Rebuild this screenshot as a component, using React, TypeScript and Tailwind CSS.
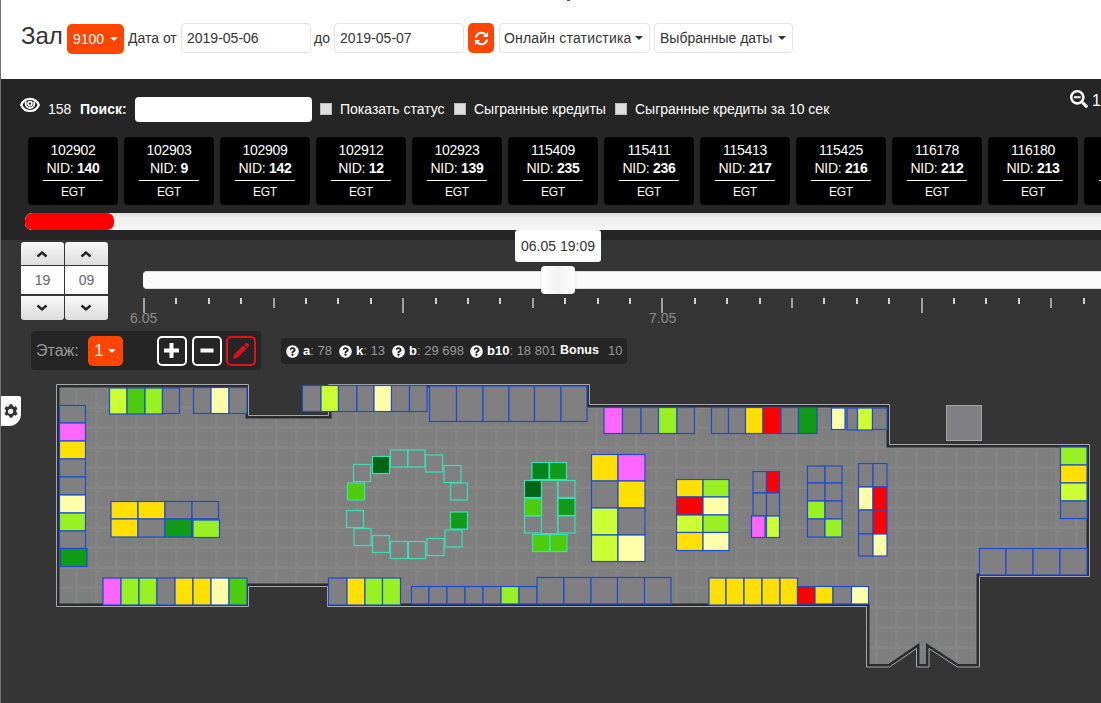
import React from 'react';
import { FaSearchMinus, FaQuestionCircle, FaCog } from 'react-icons/fa';

const palette: Record<string, string> = {
  '-': '#808083',
  Y: '#ffe000',
  P: '#ff66ff',
  C: '#ffffaa',
  L: '#99f022',
  H: '#ccff33',
  D: '#109c18',
  G: '#4ccc0c',
  R: '#ff0000',
  K: '#006614',
  M: '#04841a',
};

type Block = { xs: number[]; ys: number[]; rows: string[] };

const blocks: Block[] = [
  { xs: [59.5, 85.5], ys: [405.5, 423, 441, 459, 477, 495, 513, 531, 548.5], rows: ['-', 'P', 'Y', '-', '-', 'C', 'L', '-'] },
  { xs: [60.5, 87], ys: [548.5, 566.5], rows: ['D'] },
  { xs: [109.5, 127, 145, 162.5], ys: [388, 414], rows: ['HGL'] },
  { xs: [162.5, 179.5], ys: [388, 413.5], rows: ['-'] },
  { xs: [193.5, 211, 229, 247], ys: [387.5, 413.5], rows: ['-C-'] },
  { xs: [111, 138, 165, 192, 218.5], ys: [501.5, 519, 537], rows: ['YY--', 'Y-D-'] },
  { xs: [193, 219.5], ys: [520, 537.5], rows: ['L'] },
  { xs: [103, 121, 139, 157, 175, 193, 211, 229, 247], ys: [578, 605], rows: ['PLL-YYCG'] },
  { xs: [302.5, 321, 338.5, 357, 374, 391.5, 409.5, 427], ys: [385.5, 411.5], rows: ['-H--C--'] },
  { xs: [429.5, 456.5, 483, 509, 534.5, 561, 587], ys: [386, 421.5], rows: ['------'] },
  { xs: [328.5, 347, 365, 382.5, 400.5], ys: [578, 605], rows: ['-YLL'] },
  { xs: [411.5, 429, 447, 465, 483, 501, 519, 537], ys: [586.5, 604], rows: ['-----L-'] },
  { xs: [537, 564, 591, 617.5, 644.5, 671], ys: [577.5, 604], rows: ['-----'] },
  { xs: [604, 622.5, 641, 658.5, 677, 694.5], ys: [407.5, 433.5], rows: ['P--L-'] },
  { xs: [711.5, 728.5, 745.5, 763, 781, 798.5, 817], ys: [407.5, 433.5], rows: ['--YR-D'] },
  { xs: [831.5, 845], ys: [408, 429.5], rows: ['C'] },
  { xs: [847, 857.5, 872.5], ys: [408, 430], rows: ['-H'] },
  { xs: [872.5, 887], ys: [408, 429.5], rows: ['-'] },
  { xs: [591.5, 618, 645], ys: [454.5, 481, 508, 535, 561.5], rows: ['YP', '-Y', 'H-', 'HC'] },
  { xs: [676.5, 703, 729], ys: [479.5, 497, 515, 532.5, 550.5], rows: ['YL', 'RC', 'HL', 'YC'] },
  { xs: [753, 766.5, 779.5], ys: [471.5, 493, 516], rows: ['-R', '--'] },
  { xs: [751.5, 765], ys: [516, 537.5], rows: ['P'] },
  { xs: [766.5, 779.5], ys: [516, 537.5], rows: ['H'] },
  { xs: [807.5, 825, 842], ys: [466, 483, 501, 519, 537], rows: ['--', '--', 'L-', '-L'] },
  { xs: [858.5, 873, 887], ys: [463.5, 487, 510, 534, 556], rows: ['--', 'CR', '-R', '-C'] },
  { xs: [709, 726, 744, 762, 780, 797.5], ys: [578, 605], rows: ['YYYYY'] },
  { xs: [797.5, 815, 833, 851.5, 868.5], ys: [586.5, 604], rows: ['RY-C'] },
  { xs: [1060.5, 1087], ys: [447, 465, 483, 501, 518.5], rows: ['L', 'Y', 'H', '-'] },
  { xs: [979.5, 1006, 1033, 1060, 1087], ys: [548.5, 575], rows: ['----'] },
];

const islands: [number, number, string][] = [
  [353.5, 464.5, '-'], [372.5, 456.5, 'K'], [390.5, 450, '-'], [408, 450, '-'], [425.5, 455, '-'], [444, 465.5, '-'],
  [450.5, 483, '-'], [347.5, 483, 'G'], [346.5, 510.5, '-'], [354, 528.5, '-'], [372.5, 535.5, '-'], [390.5, 541.5, '-'],
  [408.5, 541.5, '-'], [427, 538.5, '-'], [445, 530, '-'], [450.5, 512, 'D'],
  [532, 462.5, 'M'], [549.5, 462.5, 'D'], [524.5, 480.5, 'K'], [524.5, 498.5, 'G'], [524.5, 516, '-'],
  [558, 480.5, '-'], [558, 498.5, 'D'], [558, 516, '-'], [532.5, 534.5, 'G'], [550, 534.5, 'G'],
];

const OUTLINE =
  '56.5,384.5 248.5,384.5 248.5,415.5 328.5,415.5 328.5,384.5 589.5,384.5 589.5,404.5 889.5,404.5 889.5,444.5 1089.5,444.5 1089.5,576.5 979.5,576.5 979.5,667 957.5,667 929,648.5 929,667 916.5,667 916.5,648.5 889.5,667 866.5,667 866.5,606.5 327.5,606.5 327.5,586.5 248.5,586.5 248.5,606.5 56.5,606.5';

function FloorPlan() {
  return (
    <svg className="block h-[328px] w-[1101px]" viewBox="0 375 1101 328">
      <defs>
        <pattern id="tiles" width="40" height="40" x="75" y="406" patternUnits="userSpaceOnUse">
          <path d="M0 1.5H40M1.5 0V40" stroke="#858585" strokeWidth="3" />
          <path d="M0 21.5H40M21.5 0V40" stroke="#838383" strokeWidth="3" />
        </pattern>
        <clipPath id="hall"><polygon points={OUTLINE} /></clipPath>
      </defs>
      <polygon points={OUTLINE} fill="#7f7f7f" />
      <polygon points={OUTLINE} fill="url(#tiles)" />
      <polygon points={OUTLINE} fill="none" stroke="#2b2c30" strokeWidth="6" clipPath="url(#hall)" />
      <polygon points={OUTLINE} fill="none" stroke="#a8a8a8" strokeWidth="1" />
      <rect x="946.5" y="405.5" width="35" height="35" fill="#808084" stroke="#a6a6a8" />
      {blocks.map((b, i) =>
        b.rows.map((row, r) =>
          row.split('').map((c, k) => (
            <rect key={`${i}-${r}-${k}`} x={b.xs[k]} y={b.ys[r]} width={b.xs[k + 1] - b.xs[k]} height={b.ys[r + 1] - b.ys[r]} fill={palette[c]} stroke="#1f4ccc" strokeWidth="1.2" />
          )),
        ),
      )}
      {islands.map(([x, y, c], i) => (
        <rect key={i} x={x} y={y} width="17" height="17" fill={palette[c]} stroke="#3fdcb4" strokeWidth="1.2" />
      ))}
      <path d="M541.5 480.5H557.5V533.5H541.5Z" fill="none" stroke="#3fdcb4" strokeWidth="1" />
    </svg>
  );
}

const Caret = ({ className = '' }: { className?: string }) => (
  <svg className={`h-1 w-2 shrink-0 ${className}`} viewBox="0 0 8 4"><path d="M0 0H8L4 4Z" fill="currentColor" /></svg>
);

const Eye = () => (
  <svg className="mb-[7px] h-4 w-5 shrink-0" viewBox="0 0 20 16" fill="none" stroke="#fff">
    <path d="M1.2 8C3 3.6 6.2 1.8 10 1.8S17 3.6 18.8 8C17 12.2 13.8 14 10 14S3 12.2 1.2 8Z" strokeWidth="2.2" />
    <path d="M6 4.5C4.8 8 6.6 11 10 11S15.200 8 14 4.500" strokeWidth="1.8" />
    <circle cx="10" cy="6.600" r="2" strokeWidth="1.600" />
  </svg>
);

const Refresh = () => (
  <svg className="h-[15px] w-[15px]" viewBox="0 0 16 16" fill="none" stroke="#fff" strokeWidth="2.2">
    <path d="M2 7a6 6 0 0 1 10.4-3M14 9A6 6 0 0 1 3.6 12" />
    <path d="M15 .8V6.4H9.4ZM1 15.2V9.6H6.6Z" fill="#fff" stroke="none" />
  </svg>
);

const Check = ({ label, width }: { label: string; width: string }) => (
  <label className={`flex shrink-0 items-center whitespace-nowrap ${width}`}>
    <span className="mr-2 h-3 w-3 shrink-0 border border-[#bcbcbc] bg-[#dedede]" />
    {label}
  </label>
);

const machines = [
  ['102902', '140'], ['102903', '9'], ['102909', '142'], ['102912', '12'], ['102923', '139'], ['115409', '235'],
  ['115411', '236'], ['115413', '217'], ['115425', '216'], ['116178', '212'], ['116180', '213'],
];

const Spinner = ({ value }: { value: string }) => (
  <div className="flex w-[43px] flex-col text-center text-sm text-[#666]">
    <button className="flex h-[23px] items-center justify-center rounded-t-[3px] bg-linear-to-b from-[#fafafa] to-[#dcdcdc]">
      <svg className="mr-px h-2 w-3" viewBox="0 0 12 8"><path d="M1.5 6.500L6 2.500L10.500 6.500" fill="none" stroke="#222" strokeWidth="2.4" /></svg>
    </button>
    <div className="mt-px h-[28px] bg-[#fdfdfd] leading-7">{value}</div>
    <button className="mt-[2px] flex h-6 items-center justify-center rounded-b-[3px] bg-linear-to-b from-[#fafafa] to-[#dcdcdc]">
      <svg className="mb-px mr-px h-2 w-3" viewBox="0 0 12 8"><path d="M1.5 1.500L6 5.500L10.500 1.500" fill="none" stroke="#222" strokeWidth="2.4" /></svg>
    </button>
  </div>
);

const Stat = ({ name, value, width }: { name: string; value: string; width: string }) => (
  <span className={`flex shrink-0 items-center whitespace-nowrap ${width}`}>
    <FaQuestionCircle className="mr-1 h-[13px] w-[13px] shrink-0 text-white" />
    <b className="text-white">{name}</b>:&nbsp;{value}
  </span>
);

const ticks = Array.from({ length: 30 }, (_, i) => i);

export default function App() {
  return (
    <div className="relative h-[703px] w-[1101px] overflow-hidden bg-[#353535] font-['Liberation_Sans',Arial,sans-serif] text-sm text-[#333]">
      <header className="flex h-[79px] items-start bg-white pl-[21px] pt-[23px]">
        <h1 className="w-[46px] shrink-0 text-2xl leading-[25px]">Зал</h1>
        <button className="mt-px flex h-[30px] w-[57px] shrink-0 items-center justify-center gap-[6px] rounded-[5px] bg-[#ff4500] text-white">
          9100 <Caret />
        </button>
        <span className="ml-1 w-[53px] shrink-0 whitespace-nowrap leading-[31px]">Дата от</span>
        <div className="h-[30px] w-[130px] shrink-0 rounded-[4px] border border-[#e4e4e4] pl-[5px] leading-[29px]">2019-05-06</div>
        <span className="ml-[3px] w-5 shrink-0 leading-[31px]">до</span>
        <div className="h-[30px] w-[130px] shrink-0 rounded-[4px] border border-[#e4e4e4] pl-[5px] leading-[29px]">2019-05-07</div>
        <button className="ml-1 flex h-[30px] w-[26px] shrink-0 items-center justify-center rounded-[5px] bg-[#ff4500]"><Refresh /></button>
        <button className="ml-[5px] flex h-[30px] w-[151px] shrink-0 items-center justify-between whitespace-nowrap rounded-[4px] border border-[#e4e4e4] pl-1 pr-[6px] tracking-[0.18px]">
          Онлайн статистика <Caret />
        </button>
        <button className="ml-1 flex h-[30px] w-[139px] shrink-0 items-center justify-between whitespace-nowrap rounded-[4px] border border-[#e4e4e4] pl-[5px] pr-[6px]">
          Выбранные даты <Caret />
        </button>
      </header>

      <section className="h-[161px] bg-[#252525] text-white">
        <div className="flex h-[58px] items-center overflow-hidden pl-5 pt-px">
          <Eye />
          <span className="ml-2 w-8 shrink-0">158</span>
          <b className="w-[55px] shrink-0">Поиск:</b>
          <div className="mr-2 mt-[2px] h-[25px] w-[177px] shrink-0 rounded-[4px] bg-white" />
          <Check label="Показать статус" width="w-[134px]" />
          <Check label="Сыгранные кредиты" width="w-[161px]" />
          <Check label="Сыгранные кредиты за 10 сек" width="w-[455px]" />
          <FaSearchMinus className="mb-[19px] h-[18px] w-[18px] shrink-0" />
          <span className="mb-[15px] ml-1 shrink-0 text-base">1</span>
        </div>
        <div className="flex h-[76px] gap-[6px] overflow-hidden pl-[28px]">
          {machines.map(([id, nid]) => (
            <div key={id} className="flex h-[68px] w-[90px] shrink-0 flex-col items-center rounded-[4px] bg-black pt-1 leading-[18px]">
              <span className="tracking-[-0.3px]">{id}</span>
              <span className="tracking-[-0.3px]">NID: <b>{nid}</b></span>
              <hr className="mt-[3px] w-[60px] border-white" />
              <span className="mt-[2px] text-xs leading-[18px] tracking-[-0.3px]">EGT</span>
            </div>
          ))}
          <div className="h-[68px] w-[17px] shrink-0 rounded-l-[4px] bg-black pl-[15px] pt-[43px]">
            <hr className="border-white" />
          </div>
        </div>
        <div className="ml-[25px] h-[17px] overflow-hidden rounded-l-[7px] bg-linear-to-b from-[#dedede] via-[#f0f0f0] via-30% to-[#f5f5f5]">
          <div className="h-full w-[89px] rounded-[7px] bg-[#ff0000]" />
        </div>
      </section>

      <section className="flex h-[91px] items-start">
        <div className="ml-[21px] mt-[2px] flex shrink-0 gap-px"><Spinner value="19" /><Spinner value="09" /></div>
        <div className="relative ml-[35px] mt-[31px] w-[958px] shrink-0">
          <div className="h-[18px] rounded-l-[4px] border-y border-[#ddd] bg-[#fafafa]" />
          <div className="absolute left-[398px] top-[-5px] h-7 w-[34px] rounded-[4px] bg-linear-to-r from-white via-[#f1f1f1] to-white shadow-sm" />
          <div className="absolute left-[372px] top-[-41px] h-8 w-[86px] rounded-[3px] bg-white text-center leading-8">06.05 19:09</div>
          <svg className="mt-[9px] block h-4 w-[958px]" viewBox="0 0 958 16">
            {ticks.map((i) => (
              <path key={i} d={`M${Math.round(i * 32.4) + 1} 0V${i % 8 === 0 ? 15 : i % 4 === 0 ? 10 : 6}`} stroke={i % 4 === 0 ? '#a0a0a0' : '#d0d0d0'} strokeWidth="2" />
            ))}
          </svg>
          <div className="absolute left-[-13px] top-[37px] w-7 text-[#8c8c8c]">6.05</div>
          <div className="absolute left-[506px] top-[37px] w-7 text-[#8c8c8c]">7.05</div>
        </div>
      </section>

      <section className="flex h-[44px] items-start">
        <div className="ml-[31px] flex h-[39px] w-[230px] shrink-0 items-center rounded-[4px] bg-[#252525] pl-[5px] text-[#999]">
          <span className="w-[52px] shrink-0 text-base">Этаж:</span>
          <button className="flex h-[30px] w-[35px] items-center justify-center gap-[5px] rounded-[5px] bg-[#ff4500] text-base text-white">1 <Caret /></button>
          <button className="ml-[34px] flex h-[30px] w-[30px] items-center justify-center rounded-[5px] border-2 border-white">
            <svg className="h-4 w-4" viewBox="0 0 16 16"><path d="M0 7.500H15M7.500 0V15" stroke="#fff" strokeWidth="4" /></svg>
          </button>
          <button className="ml-[5px] flex h-[30px] w-[30px] items-center justify-center rounded-[5px] border-2 border-white">
            <svg className="h-4 w-4" viewBox="0 0 16 16"><path d="M1.500 7.500H14.500" stroke="#fff" strokeWidth="4" /></svg>
          </button>
          <button className="ml-1 flex h-[30px] w-[30px] items-center justify-center rounded-[5px] border-2 border-[#e01020]">
            <svg className="h-[18px] w-[18px]" viewBox="0 0 18 18" fill="#e01020">
              <path d="M1 17L2.200 12.600L11.400 3.400L14.600 6.600L5.400 15.800Z" />
              <path d="M12.200 2.600L13.800 1H15.200L17 2.800V4.200L15.400 5.800Z" />
            </svg>
          </button>
        </div>
        <div className="ml-5 mt-[7px] flex h-[26px] w-[346px] items-center rounded-[4px] bg-[#252525] pl-[5px] text-[13px] text-[#999]">
          <Stat name="a" value="78" width="w-[53px]" />
          <Stat name="k" value="13" width="w-[53px]" />
          <Stat name="b" value="29 698" width="w-[78px]" />
          <Stat name="b10" value="18 801" width="w-[90px]" />
          <b className="w-12 text-[12.500px] text-white">Bonus</b>
          <span>10</span>
        </div>
      </section>

      <FloorPlan />

      <div className="absolute left-0 top-[396px] flex h-[30px] w-[21px] items-center justify-center rounded-br-[12px] rounded-tr-[2px] bg-white">
        <FaCog className="h-[14px] w-[14px] text-[#333]" />
        <span className="absolute h-[5px] w-[5px] rounded-full bg-white" />
      </div>
      <div className="absolute left-0 top-0 h-[703px] w-px bg-[#707070]" />
      <div className="absolute left-[567px] top-0 h-px w-[3px] bg-[#555]" />
    </div>
  );
}
